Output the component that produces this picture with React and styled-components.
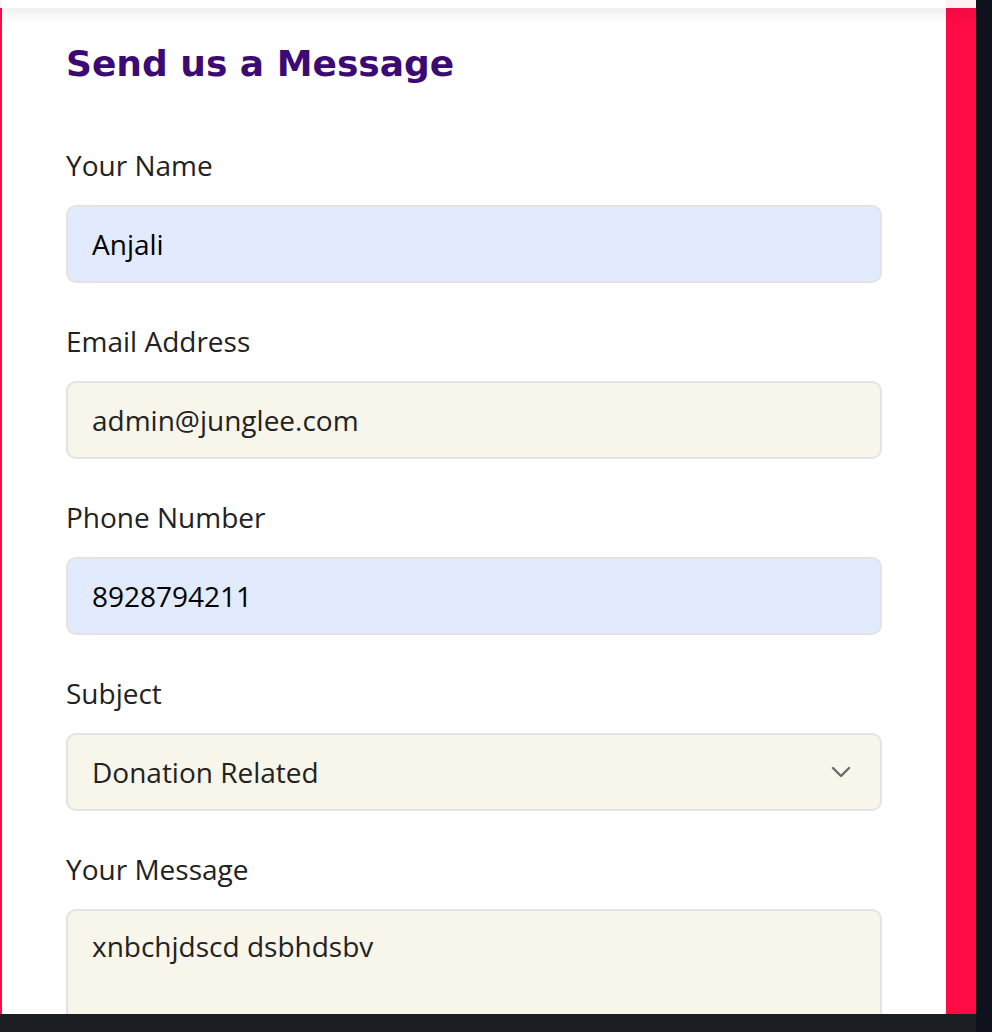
import React from "react";
import styled, { createGlobalStyle } from "styled-components";

const GlobalStyle = createGlobalStyle`
  html, body {
    margin: 0;
    padding: 0;
    overflow: hidden;
  }
  * {
    box-sizing: border-box;
  }
`;

const Frame = styled.div`
  width: 992px;
  height: 1032px;
  display: grid;
  grid-template-columns: 976px 16px;
  grid-template-rows: 1014px 18px;
  background: #0f121c;
`;

const Viewport = styled.div`
  position: relative;
  overflow: hidden;
  background: #ff0c46;
  padding-left: 2px;
`;

const TopBar = styled.div`
  position: absolute;
  top: 0;
  left: 0;
  right: 0;
  height: 8px;
  background: rgba(255, 255, 255, 0.94);
  box-shadow: 0 2px 16px rgba(0, 0, 0, 0.16);
  z-index: 2;
`;

const Card = styled.div`
  width: 944px;
  min-height: 1100px;
  background: #fff;
  padding: 36px 64px 0 64px;
  font-family: "Open Sans", "Noto Sans", sans-serif;
`;

const Title = styled.h2`
  margin: 0 0 54px 0;
  font-family: "DejaVu Sans", Inter, sans-serif;
  font-weight: 700;
  font-size: 36px;
  line-height: 56px;
  color: #3c0a74;
`;

const Form = styled.form`
  width: 816px;
  display: flex;
  flex-direction: column;
  gap: 39px;
`;

const Field = styled.div`
  display: flex;
  flex-direction: column;
  gap: 20px;
`;

const Label = styled.label`
  font-size: 28px;
  font-weight: 500;
  line-height: 39px;
  color: #222;
`;

const inputBase = `
  width: 100%;
  height: 78px;
  border: 2px solid #e3e3e0;
  border-radius: 10px;
  padding: 0 24px;
  font-family: "Open Sans", "Noto Sans", sans-serif;
  font-size: 28px;
  color: #222;
  outline: none;
`;

const Input = styled.input`
  ${inputBase}
  background: ${(p) => (p.$filled ? "#e2eafd" : "#f8f6ea")};
  color: ${(p) => (p.$filled ? "#000" : "#222")};
`;

const SelectWrap = styled.div`
  position: relative;
`;

const Select = styled.select`
  ${inputBase}
  appearance: none;
  background: #f8f6ea;
`;

const Chevron = styled.svg`
  position: absolute;
  right: 31px;
  top: 50%;
  transform: translateY(-50%);
  width: 20px;
  height: 12px;
  pointer-events: none;
`;

const TextArea = styled.textarea`
  ${inputBase}
  height: 160px;
  padding: 15px 24px;
  line-height: 40px;
  resize: none;
  background: #f8f6ea;
`;

const BottomBar = styled.div`
  grid-column: 1 / 2;
  background: #1b1e22;
`;

const Corner = styled.div`
  background: #0f121c;
`;

export default function App() {
  return (
    <>
      <GlobalStyle />
      <Frame>
        <Viewport>
          <TopBar />
          <Card>
            <Title>Send us a Message</Title>
            <Form>
              <Field>
                <Label>Your Name</Label>
                <Input $filled defaultValue="Anjali" />
              </Field>
              <Field>
                <Label>Email Address</Label>
                <Input defaultValue="admin@junglee.com" />
              </Field>
              <Field>
                <Label>Phone Number</Label>
                <Input $filled defaultValue="8928794211" />
              </Field>
              <Field>
                <Label>Subject</Label>
                <SelectWrap>
                  <Select defaultValue="donation">
                    <option value="donation">Donation Related</option>
                  </Select>
                  <Chevron viewBox="0 0 20 12">
                    <path
                      d="M2 2 L10 10 L18 2"
                      fill="none"
                      stroke="#6b6b6b"
                      strokeWidth="2.4"
                      strokeLinecap="round"
                      strokeLinejoin="round"
                    />
                  </Chevron>
                </SelectWrap>
              </Field>
              <Field>
                <Label>Your Message</Label>
                <TextArea defaultValue="xnbchjdscd dsbhdsbv" />
              </Field>
            </Form>
          </Card>
        </Viewport>
        <Corner />
        <BottomBar />
      </Frame>
    </>
  );
}
